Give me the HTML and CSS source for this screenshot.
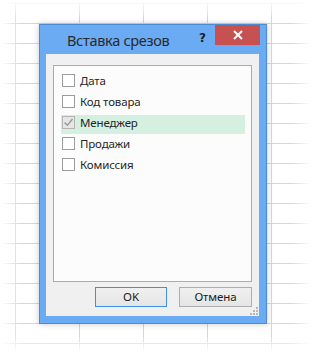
FILE: index.html
```html
<!DOCTYPE html>
<html lang="ru">
<head>
<meta charset="utf-8">
<link rel="stylesheet" href="styles.css">
</head>
<body>
<div class="dialog">
  <div class="titlebar">
    <span class="title">Вставка срезов</span>
    <span class="help">?</span>
    <span class="close"><svg width="10" height="10" viewBox="0 0 10 10"><path d="M1 1L9 9M9 1L1 9" stroke="#fff" stroke-width="2"/></svg></span>
  </div>
  <div class="content">
    <div class="listbox">
      <div class="row"><span class="cb"></span><span class="label">Дата</span></div>
      <div class="row"><span class="cb"></span><span class="label">Код товара</span></div>
      <div class="row sel"><span class="cb checked"><svg width="11" height="11" viewBox="0 0 11 11"><path d="M1.5 5.5L4.3 8.3L9.5 2" fill="none" stroke="#959595" stroke-width="1.3"/></svg></span><span class="label">Менеджер</span></div>
      <div class="row"><span class="cb"></span><span class="label">Продажи</span></div>
      <div class="row"><span class="cb"></span><span class="label">Комиссия</span></div>
    </div>
    <div class="buttons">
      <span class="btn ok">OK</span>
      <span class="btn">Отмена</span>
    </div>
    <svg class="grip" width="9" height="9" viewBox="0 0 9 9"><g fill="#b8b8b8"><rect x="7" y="1" width="2" height="2"/><rect x="4" y="4" width="2" height="2"/><rect x="7" y="4" width="2" height="2"/><rect x="1" y="7" width="2" height="2"/><rect x="4" y="7" width="2" height="2"/><rect x="7" y="7" width="2" height="2"/></g></svg>
  </div>
</div>
</body>
</html>
```
FILE: styles.css
```css
html, body { margin: 0; height: 100%; }
body {
  width: 312px;
  height: 353px;
  box-sizing: border-box;
  padding: 24px 0 0 39px;
  overflow: hidden;
  font-family: "Noto Sans", "Open Sans", sans-serif;
  background-color: #fff;
  background-image:
    linear-gradient(to right, #fff 0, rgba(255,255,255,0) 22px, rgba(255,255,255,0) 290px, #fff 312px),
    linear-gradient(to bottom, #fff 0, rgba(255,255,255,0) 18px, rgba(255,255,255,0) 335px, #fff 353px),
    linear-gradient(to bottom, transparent 19px, #d6d6d6 19px),
    linear-gradient(to right, transparent 63px, #d6d6d6 63px);
  background-size: 100% 100%, 100% 100%, 100% 20px, 64px 100%;
  background-position: 0 0, 0 0, 0 4px, 16px 0;
}
.dialog {
  width: 228px;
  height: 300px;
  box-sizing: border-box;
  border: 1px solid #4c8ad4;
  background: #6aabf4;
  padding: 0 7px 7px 6px;
  display: flex;
  flex-direction: column;
  box-shadow: 0 0 6px rgba(0,0,0,0.22);
}
.titlebar {
  height: 29px;
  display: flex;
  align-items: flex-start;
  flex-shrink: 0;
}
.title {
  margin-left: 21px;
  margin-top: 5px;
  font-size: 14.5px;
  letter-spacing: -0.3px;
  line-height: 20px;
  color: #2a2a2a;
  flex: 1;
}
.help {
  font-family: "DejaVu Sans", sans-serif;
  font-weight: bold;
  font-size: 12px;
  line-height: 14px;
  color: #1e1e1e;
  margin-top: 6px;
  margin-right: 9px;
}
.close {
  width: 45px;
  height: 20px;
  background: #c75050;
  display: flex;
  align-items: center;
  justify-content: center;
  margin-right: -1px;
}
.close svg { display: block; }
.content {
  flex: 1;
  background: #f0f0f0;
  padding: 11px 7px 0 7px;
  display: flex;
  flex-direction: column;
  position: relative;
}
.listbox {
  height: 217px;
  box-sizing: border-box;
  border: 1px solid #acacac;
  background: #fcfcfc;
  padding: 7px 6px 0 7px;
  display: flex;
  flex-direction: column;
  gap: 2px;
}
.row {
  height: 19px;
  display: flex;
  align-items: flex-start;
}
.row.sel { background: #d5efe1; }
.cb {
  width: 13px;
  height: 13px;
  box-sizing: border-box;
  border: 1px solid #9c9c9c;
  background: #fff;
  margin: 1px 5px 0 1px;
  flex-shrink: 0;
  display: flex;
  align-items: center;
  justify-content: center;
}
.cb.checked { background: #e6e6e6; border-color: #b4b4b4; }
.cb svg { display: block; }
.label {
  font-size: 11.5px;
  letter-spacing: -0.15px;
  line-height: 15px;
  color: #262626;
}
.buttons {
  margin-top: 5px;
  display: flex;
  justify-content: flex-end;
  gap: 12px;
}
.btn {
  width: 73px;
  height: 20px;
  box-sizing: border-box;
  border: 1px solid #adadad;
  background: linear-gradient(#f0f0f0, #e5e5e5);
  font-size: 11.5px;
  letter-spacing: -0.1px;
  line-height: 18px;
  text-align: center;
  color: #1a1a1a;
}
.btn.ok { border-color: #3f8fe6; width: 72px; }
.grip {
  position: absolute;
  right: 1px;
  bottom: 1px;
}
```
